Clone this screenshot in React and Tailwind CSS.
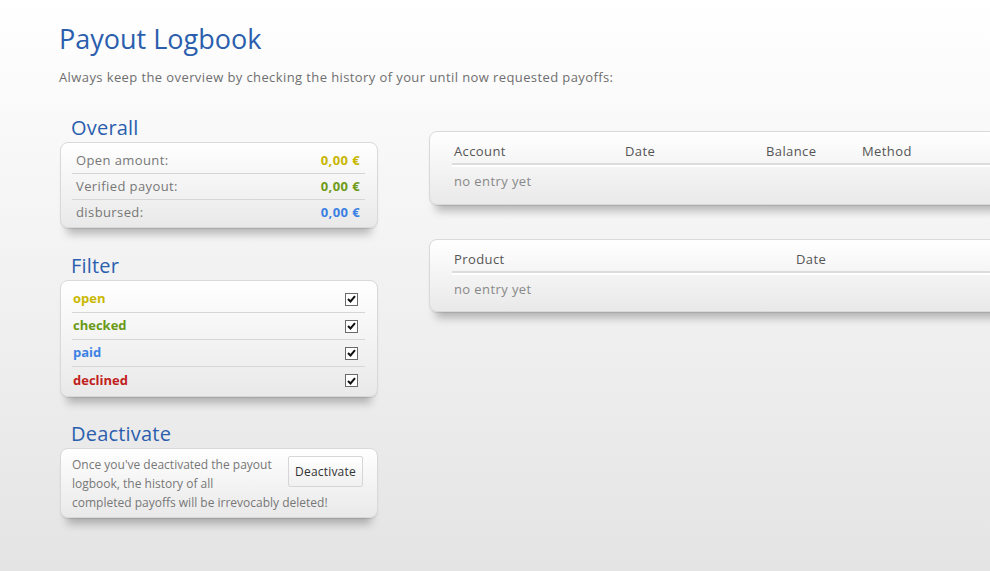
import React from "react"

const card =
  "rounded-[8px] border border-[#d9d9d9] bg-gradient-to-b from-white to-[#e9e9e9] shadow-[0_1px_1px_rgba(0,0,0,0.1),0_13px_8px_-7px_rgba(0,0,0,0.25)]"

function Check() {
  return (
    <span className="flex h-[13px] w-[13px] items-center justify-center border border-[#6a6a6a] bg-white">
      <svg width="9" height="8" viewBox="0 0 9 8">
        <path d="M1 4 L3.5 6.5 L8 1.2" fill="none" stroke="#111" strokeWidth="2" />
      </svg>
    </span>
  )
}

function SideHeading({ children }) {
  return (
    <h2 className="mb-[2px] h-[24px] pl-[11px] text-[20px] leading-[24px] tracking-[0.2px] text-[#2b5fae]">
      {children}
    </h2>
  )
}

export default function App() {
  const amounts = [
    { label: "Open amount:", value: "0,00 €", color: "text-[#c8b600]" },
    { label: "Verified payout:", value: "0,00 €", color: "text-[#6e9b18]" },
    { label: "disbursed:", value: "0,00 €", color: "text-[#3b80e2]" },
  ]
  const filters = [
    { label: "open", color: "text-[#c9b800]" },
    { label: "checked", color: "text-[#6a9a16]" },
    { label: "paid", color: "text-[#3d82e4]" },
    { label: "declined", color: "text-[#c1211c]" },
  ]

  return (
    <div
      className="h-[571px] w-[990px] overflow-hidden bg-gradient-to-b from-white to-[#e4e4e4] pl-[59px] pt-[21px]"
      style={{ fontFamily: "'Open Sans', sans-serif" }}
    >
      <h1 className="h-[36px] text-[27px] leading-[36px] text-[#2b5fae]">Payout Logbook</h1>
      <p className="mt-[11px] h-[18px] text-[13px] leading-[18px] tracking-[0.4px] text-[#6f6f6f]">
        Always keep the overview by checking the history of your until now requested payoffs:
      </p>

      <div className="mt-[30px] flex items-start">
        {/* Left column */}
        <div className="ml-[1px] w-[318px] shrink-0">
          <SideHeading>Overall</SideHeading>
          <div className={`${card} pb-[1px] pl-[11px] pr-[12px] pt-[5px]`}>
            {amounts.map((a, i) => (
              <div
                key={a.label}
                className={`flex h-[26px] items-center justify-between pl-[4px] pr-[5px] text-[13px] tracking-[0.4px] ${
                  i < amounts.length - 1 ? "border-b border-[#d6d6d6]" : ""
                }`}
              >
                <span className="text-[#777]">{a.label}</span>
                <span className={`font-bold ${a.color}`}>{a.value}</span>
              </div>
            ))}
          </div>

          <div className="mt-[26px]">
            <SideHeading>Filter</SideHeading>
            <div className={`${card} pb-[2px] pl-[11px] pr-[12px] pt-[5px]`}>
              {filters.map((f, i) => (
                <div
                  key={f.label}
                  className={`flex h-[27px] items-center justify-between pl-[1px] pr-[7px] text-[13px] ${
                    i < filters.length - 1 ? "border-b border-[#d6d6d6]" : ""
                  }`}
                >
                  <span className={`font-bold ${f.color}`}>{f.label}</span>
                  <Check />
                </div>
              ))}
            </div>
          </div>

          <div className="mt-[25px]">
            <SideHeading>Deactivate</SideHeading>
            <div
              className={`${card} pb-[5px] pl-[11px] pr-[14px] pt-[6px] text-[12px] leading-[19px] text-[#777]`}
            >
              <button className="float-right mb-[2px] ml-[8px] mt-[1px] h-[31px] w-[75px] rounded-[2px] border border-[#d6d6d6] bg-gradient-to-b from-white to-[#f0f0f0] text-[12px] tracking-[0.2px] text-[#333]">
                Deactivate
              </button>
              <p className="whitespace-nowrap">
                Once you've deactivated the payout
                <br />
                logbook, the history of all
                <br />
                completed payoffs will be irrevocably deleted!
              </p>
            </div>
          </div>
        </div>

        {/* Right column */}
        <div className="ml-[51px] mt-[15px] w-[620px] shrink-0">
          <div className={`${card} pb-[9px] pl-[22px] pt-[8px] text-[13px] tracking-[0.4px]`}>
            <div className="flex h-[25px] items-center border-b-2 border-[#dcdcdc] pl-[2px] text-[#555]">
              <span className="w-[171px]">Account</span>
              <span className="w-[141px]">Date</span>
              <span className="w-[96px]">Balance</span>
              <span>Method</span>
            </div>
            <div className="border-t-2 border-white">
              <div className="flex h-[28px] items-center pl-[2px] pt-[1px] text-[#888]">no entry yet</div>
            </div>
          </div>

          <div className={`${card} mt-[34px] pb-[8px] pl-[22px] pt-[8px] text-[13px] tracking-[0.4px]`}>
            <div className="flex h-[25px] items-center border-b-2 border-[#dcdcdc] pl-[2px] text-[#555]">
              <span className="w-[342px]">Product</span>
              <span>Date</span>
            </div>
            <div className="border-t-2 border-white">
              <div className="flex h-[28px] items-center pl-[2px] pt-[1px] text-[#888]">no entry yet</div>
            </div>
          </div>
        </div>
      </div>
    </div>
  )
}
